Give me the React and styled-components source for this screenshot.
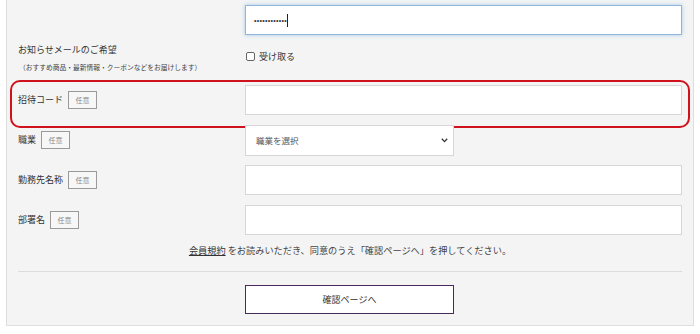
import React from "react";
import styled, { createGlobalStyle } from "styled-components";

const Global = createGlobalStyle`
  html, body { margin: 0; padding: 0; background: #ffffff; }
  body { font-family: "Noto Sans CJK JP", "Noto Sans", sans-serif; color: #333; }
  * { box-sizing: border-box; }
`;

const Panel = styled.div`
  margin-left: 6px;
  width: 688px;
  background: #f4f4f4;
  border: 1px solid #dedede;
  border-top: none;
  padding: 0 11px;
`;

const FormRow = styled.div`
  position: relative;
  display: grid;
  grid-template-columns: 227px 437px;
  height: 40px;
  align-items: ${(p) => (p.$top ? "start" : "center")};
`;

const LabelCell = styled.div`
  display: flex;
  align-items: ${(p) => (p.$column ? "flex-start" : "center")};
  flex-direction: ${(p) => (p.$column ? "column" : "row")};
  gap: 5px;
  padding-top: ${(p) => (p.$column ? "4px" : "0")};
`;

const LabelText = styled.span`
  font-size: 9px;
  line-height: 12px;
  color: #333;
  white-space: nowrap;
`;

const SubLabel = styled.span`
  font-size: 6.75px;
  line-height: 9px;
  color: #444;
  margin-top: 2px;
  margin-left: 1px;
  white-space: nowrap;
`;

const Badge = styled.span`
  display: inline-flex;
  align-items: center;
  justify-content: center;
  width: 29px;
  height: 18px;
  border: 1px solid #9a9a9a;
  background: #f7f7f7;
  color: #888;
  font-size: 7px;
`;

const TextField = styled.input`
  display: block;
  width: 437px;
  height: 30px;
  margin: 0;
  border: 1px solid #d6d6d6;
  background: #fff;
  outline: none;
  padding: 0 10px;
  font-family: inherit;
  font-size: 9px;
`;

const FocusedField = styled.div`
  display: flex;
  align-items: center;
  width: 437px;
  height: 30px;
  border: 1px solid #8fb7dc;
  background: #fff;
  box-shadow: 0 0 4px rgba(110, 165, 220, 0.55);
  padding-left: 8px;
`;

const Dots = styled.span`
  font-family: "Liberation Sans", sans-serif;
  font-size: 7px;
  letter-spacing: 0.3px;
  color: #333;
  line-height: 1;
`;

const Caret = styled.span`
  display: inline-block;
  width: 1px;
  height: 13px;
  background: #222;
  margin-left: 0px;
`;

const CheckLine = styled.label`
  display: flex;
  align-items: center;
  gap: 4px;
  margin-top: 10px;
  font-size: 9px;
  color: #333;
`;

const CheckBox = styled.span`
  display: inline-block;
  width: 9px;
  height: 9px;
  border: 1px solid #666;
  border-radius: 2px;
  background: #fff;
  margin-left: 1px;
`;

const SelectWrap = styled.div`
  position: relative;
  width: 209px;
  height: 31px;
`;

const Select = styled.select`
  appearance: none;
  -webkit-appearance: none;
  width: 100%;
  height: 100%;
  border: 1px solid #d6d6d6;
  background: #fff;
  padding: 0 10px;
  font-family: inherit;
  font-size: 8.5px;
  color: #555;
  outline: none;
  border-radius: 0;
`;

const Chevron = styled.svg`
  position: absolute;
  right: 6px;
  top: 13px;
  width: 7px;
  height: 5px;
  pointer-events: none;
`;

const Highlight = styled.div`
  position: absolute;
  left: -8px;
  right: -8px;
  top: 0;
  bottom: -8px;
  border: 2px solid #d0121c;
  border-radius: 10px;
  pointer-events: none;
`;

const Notice = styled.p`
  margin: 0;
  height: 20px;
  line-height: 20px;
  text-align: center;
  font-size: 9.2px;
  color: #444;
`;

const TermsLink = styled.a`
  color: #333;
  text-decoration: underline;
`;

const Divider = styled.hr`
  margin: 11px 0 0;
  border: none;
  border-top: 1px solid #dcdcdc;
  height: 0;
`;

const ButtonRow = styled.div`
  display: grid;
  grid-template-columns: 227px 209px;
  padding: 13px 0 11px;
`;

const SubmitButton = styled.button`
  grid-column: 2;
  height: 29px;
  border: 1px solid #4a2a5c;
  background: #fff;
  font-family: inherit;
  font-size: 9px;
  color: #333;
  cursor: pointer;
`;

function Optional() {
  return <Badge>任意</Badge>;
}

export default function App() {
  return (
    <>
      <Global />
      <Panel>
        <FormRow>
          <LabelCell />
          <FocusedField>
            <Dots>••••••••••••</Dots>
            <Caret />
          </FocusedField>
        </FormRow>

        <FormRow $top>
          <LabelCell $column>
            <LabelText>お知らせメールのご希望</LabelText>
            <SubLabel>（おすすめ商品・最新情報・クーポンなどをお届けします）</SubLabel>
          </LabelCell>
          <CheckLine>
            <CheckBox />
            受け取る
          </CheckLine>
        </FormRow>

        <FormRow>
          <LabelCell>
            <LabelText>招待コード</LabelText>
            <Optional />
          </LabelCell>
          <TextField type="text" />
          <Highlight />
        </FormRow>

        <FormRow>
          <LabelCell>
            <LabelText>職業</LabelText>
            <Optional />
          </LabelCell>
          <SelectWrap>
            <Select defaultValue="">
              <option value="">職業を選択</option>
            </Select>
            <Chevron viewBox="0 0 7 5">
              <path d="M0.8 0.8 L3.5 3.6 L6.2 0.8" fill="none" stroke="#333" strokeWidth="1.3" />
            </Chevron>
          </SelectWrap>
        </FormRow>

        <FormRow>
          <LabelCell>
            <LabelText>勤務先名称</LabelText>
            <Optional />
          </LabelCell>
          <TextField type="text" />
        </FormRow>

        <FormRow>
          <LabelCell>
            <LabelText>部署名</LabelText>
            <Optional />
          </LabelCell>
          <TextField type="text" />
        </FormRow>

        <Notice>
          <TermsLink href="#">会員規約</TermsLink> をお読みいただき、同意のうえ「確認ページへ」を押してください。
        </Notice>
        <Divider />
        <ButtonRow>
          <SubmitButton type="button">確認ページへ</SubmitButton>
        </ButtonRow>
      </Panel>
    </>
  );
}
